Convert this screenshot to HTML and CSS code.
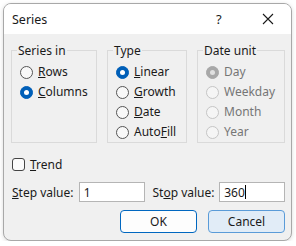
FILE: index.html
```html
<!DOCTYPE html>
<html lang="en">
<head>
    <meta charset="UTF-8">
    <title>Series</title>
    <link rel="stylesheet" href="styles.css">
</head>
<body>
    <div class="dialog">
        <div class="titlebar">
            <span class="title">Series</span>
            <span class="help">?</span>
            <span class="close">
                <svg width="12" height="12" viewBox="0 0 12 12"><path d="M1 1 L11 11 M11 1 L1 11" stroke="#1a1a1a" stroke-width="1.1" fill="none"/></svg>
            </span>
        </div>
        <div class="content">
            <div class="groups">
                <fieldset class="group group-series">
                    <legend>Series in</legend>
                    <div class="option"><span class="radio"></span><span><u>R</u>ows</span></div>
                    <div class="option"><span class="radio checked"></span><span><u>C</u>olumns</span></div>
                </fieldset>
                <fieldset class="group group-type">
                    <legend>Type</legend>
                    <div class="option"><span class="radio checked"></span><span><u>L</u>inear</span></div>
                    <div class="option"><span class="radio"></span><span><u>G</u>rowth</span></div>
                    <div class="option"><span class="radio"></span><span><u>D</u>ate</span></div>
                    <div class="option"><span class="radio"></span><span>Auto<u>F</u>ill</span></div>
                </fieldset>
                <fieldset class="group group-date disabled">
                    <legend>Date unit</legend>
                    <div class="option"><span class="radio checked"></span><span>Day</span></div>
                    <div class="option"><span class="radio"></span><span>Weekday</span></div>
                    <div class="option"><span class="radio"></span><span>Month</span></div>
                    <div class="option"><span class="radio"></span><span>Year</span></div>
                </fieldset>
            </div>
            <div class="trend"><span class="checkbox"></span><span><u>T</u>rend</span></div>
            <div class="values">
                <label class="value-label step-label"><u>S</u>tep value:</label>
                <div class="input step-input">1</div>
                <label class="value-label stop-label">St<u>o</u>p value:</label>
                <div class="input stop-input">360<span class="caret"></span></div>
            </div>
            <div class="buttons">
                <button class="btn btn-ok">OK</button>
                <button class="btn btn-cancel">Cancel</button>
            </div>
        </div>
    </div>
</body>
</html>
```

FILE: styles.css
```css
body {
    margin: 0;
    background-color: #fff;
    font-family: 'Noto Sans', sans-serif;
    font-size: 12px;
    color: #1a1a1a;
}

.dialog {
    margin: 3px 0 0 3px;
    width: 287px;
    height: 236px;
    border: 1px solid #a8a8a8;
    border-radius: 8px;
    overflow: hidden;
    background-color: #f0f0f0;
    box-shadow: 0 1px 4px rgba(0, 0, 0, 0.15);
    display: flex;
    flex-direction: column;
}

.titlebar {
    height: 30px;
    flex-shrink: 0;
    background-color: #fff;
    display: flex;
    align-items: center;
    padding-left: 8px;
}

.title {
    font-size: 12.5px;
    flex: 1;
}

.help {
    font-size: 13px;
    width: 20px;
    margin-right: 26px;
}

.close {
    width: 12px;
    height: 12px;
    margin-right: 17px;
    display: flex;
}

.content {
    padding: 8px 6px 0 7px;
}

.groups {
    display: flex;
    gap: 10px;
}

.group {
    margin: 0;
    border: 1px solid #dadada;
    padding: 3px 0 0 8px;
    height: 101px;
    box-sizing: border-box;
}

.group legend {
    padding: 0 1px;
    margin-left: -3px;
}

.group-series {
    width: 86px;
}

.group-type {
    width: 80px;
}

.group-date {
    width: 88px;
}

.option {
    display: flex;
    align-items: center;
    height: 20px;
    gap: 5px;
    line-height: 16px;
}

.radio {
    width: 11px;
    height: 11px;
    border: 1px solid #555;
    border-radius: 50%;
    background-color: #f8f8f8;
    flex-shrink: 0;
    position: relative;
}

.radio.checked {
    background-color: #005fb8;
    border-color: #005fb8;
}

.radio.checked::after {
    content: "";
    position: absolute;
    left: 3px;
    top: 3px;
    width: 5px;
    height: 5px;
    border-radius: 50%;
    background-color: #fff;
}

.disabled {
    color: #767676;
}

.disabled legend {
    color: #1a1a1a;
}

.disabled .radio {
    border-color: #c5c5c5;
    background-color: #f5f5f5;
}

.disabled .radio.checked {
    background-color: #a8a8a8;
    border-color: #a8a8a8;
}

.disabled .radio.checked::after {
    background-color: #e0e0e0;
}

.trend {
    display: flex;
    align-items: center;
    gap: 5px;
    margin-top: 14px;
    padding-left: 1px;
    height: 14px;
}

.checkbox {
    width: 11px;
    height: 11px;
    border: 1px solid #444;
    border-radius: 3px;
    background-color: #fbfbfb;
}

.values {
    display: flex;
    align-items: center;
    margin-top: 11px;
    padding-left: 1px;
}

.value-label {
    width: 67px;
}

.stop-label {
    width: 67px;
    margin-left: 8px;
}

.input {
    width: 60px;
    height: 18px;
    border: 1px solid #b5b5b5;
    background-color: #fff;
    padding-left: 4px;
    display: flex;
    align-items: center;
}

.caret {
    width: 1px;
    height: 14px;
    background-color: #000;
}

.buttons {
    display: flex;
    justify-content: flex-end;
    gap: 11px;
    margin-top: 8px;
    padding-right: 0;
}

.btn {
    width: 77px;
    height: 23px;
    border: 1px solid #0067c0;
    border-radius: 4px;
    background-color: #fdfdfd;
    font-family: 'Noto Sans', sans-serif;
    font-size: 12px;
    color: #1a1a1a;
    padding: 0;
}

.btn-cancel {
    background-color: #e1ecf7;
    border-color: #5a9bd8;
}
```
